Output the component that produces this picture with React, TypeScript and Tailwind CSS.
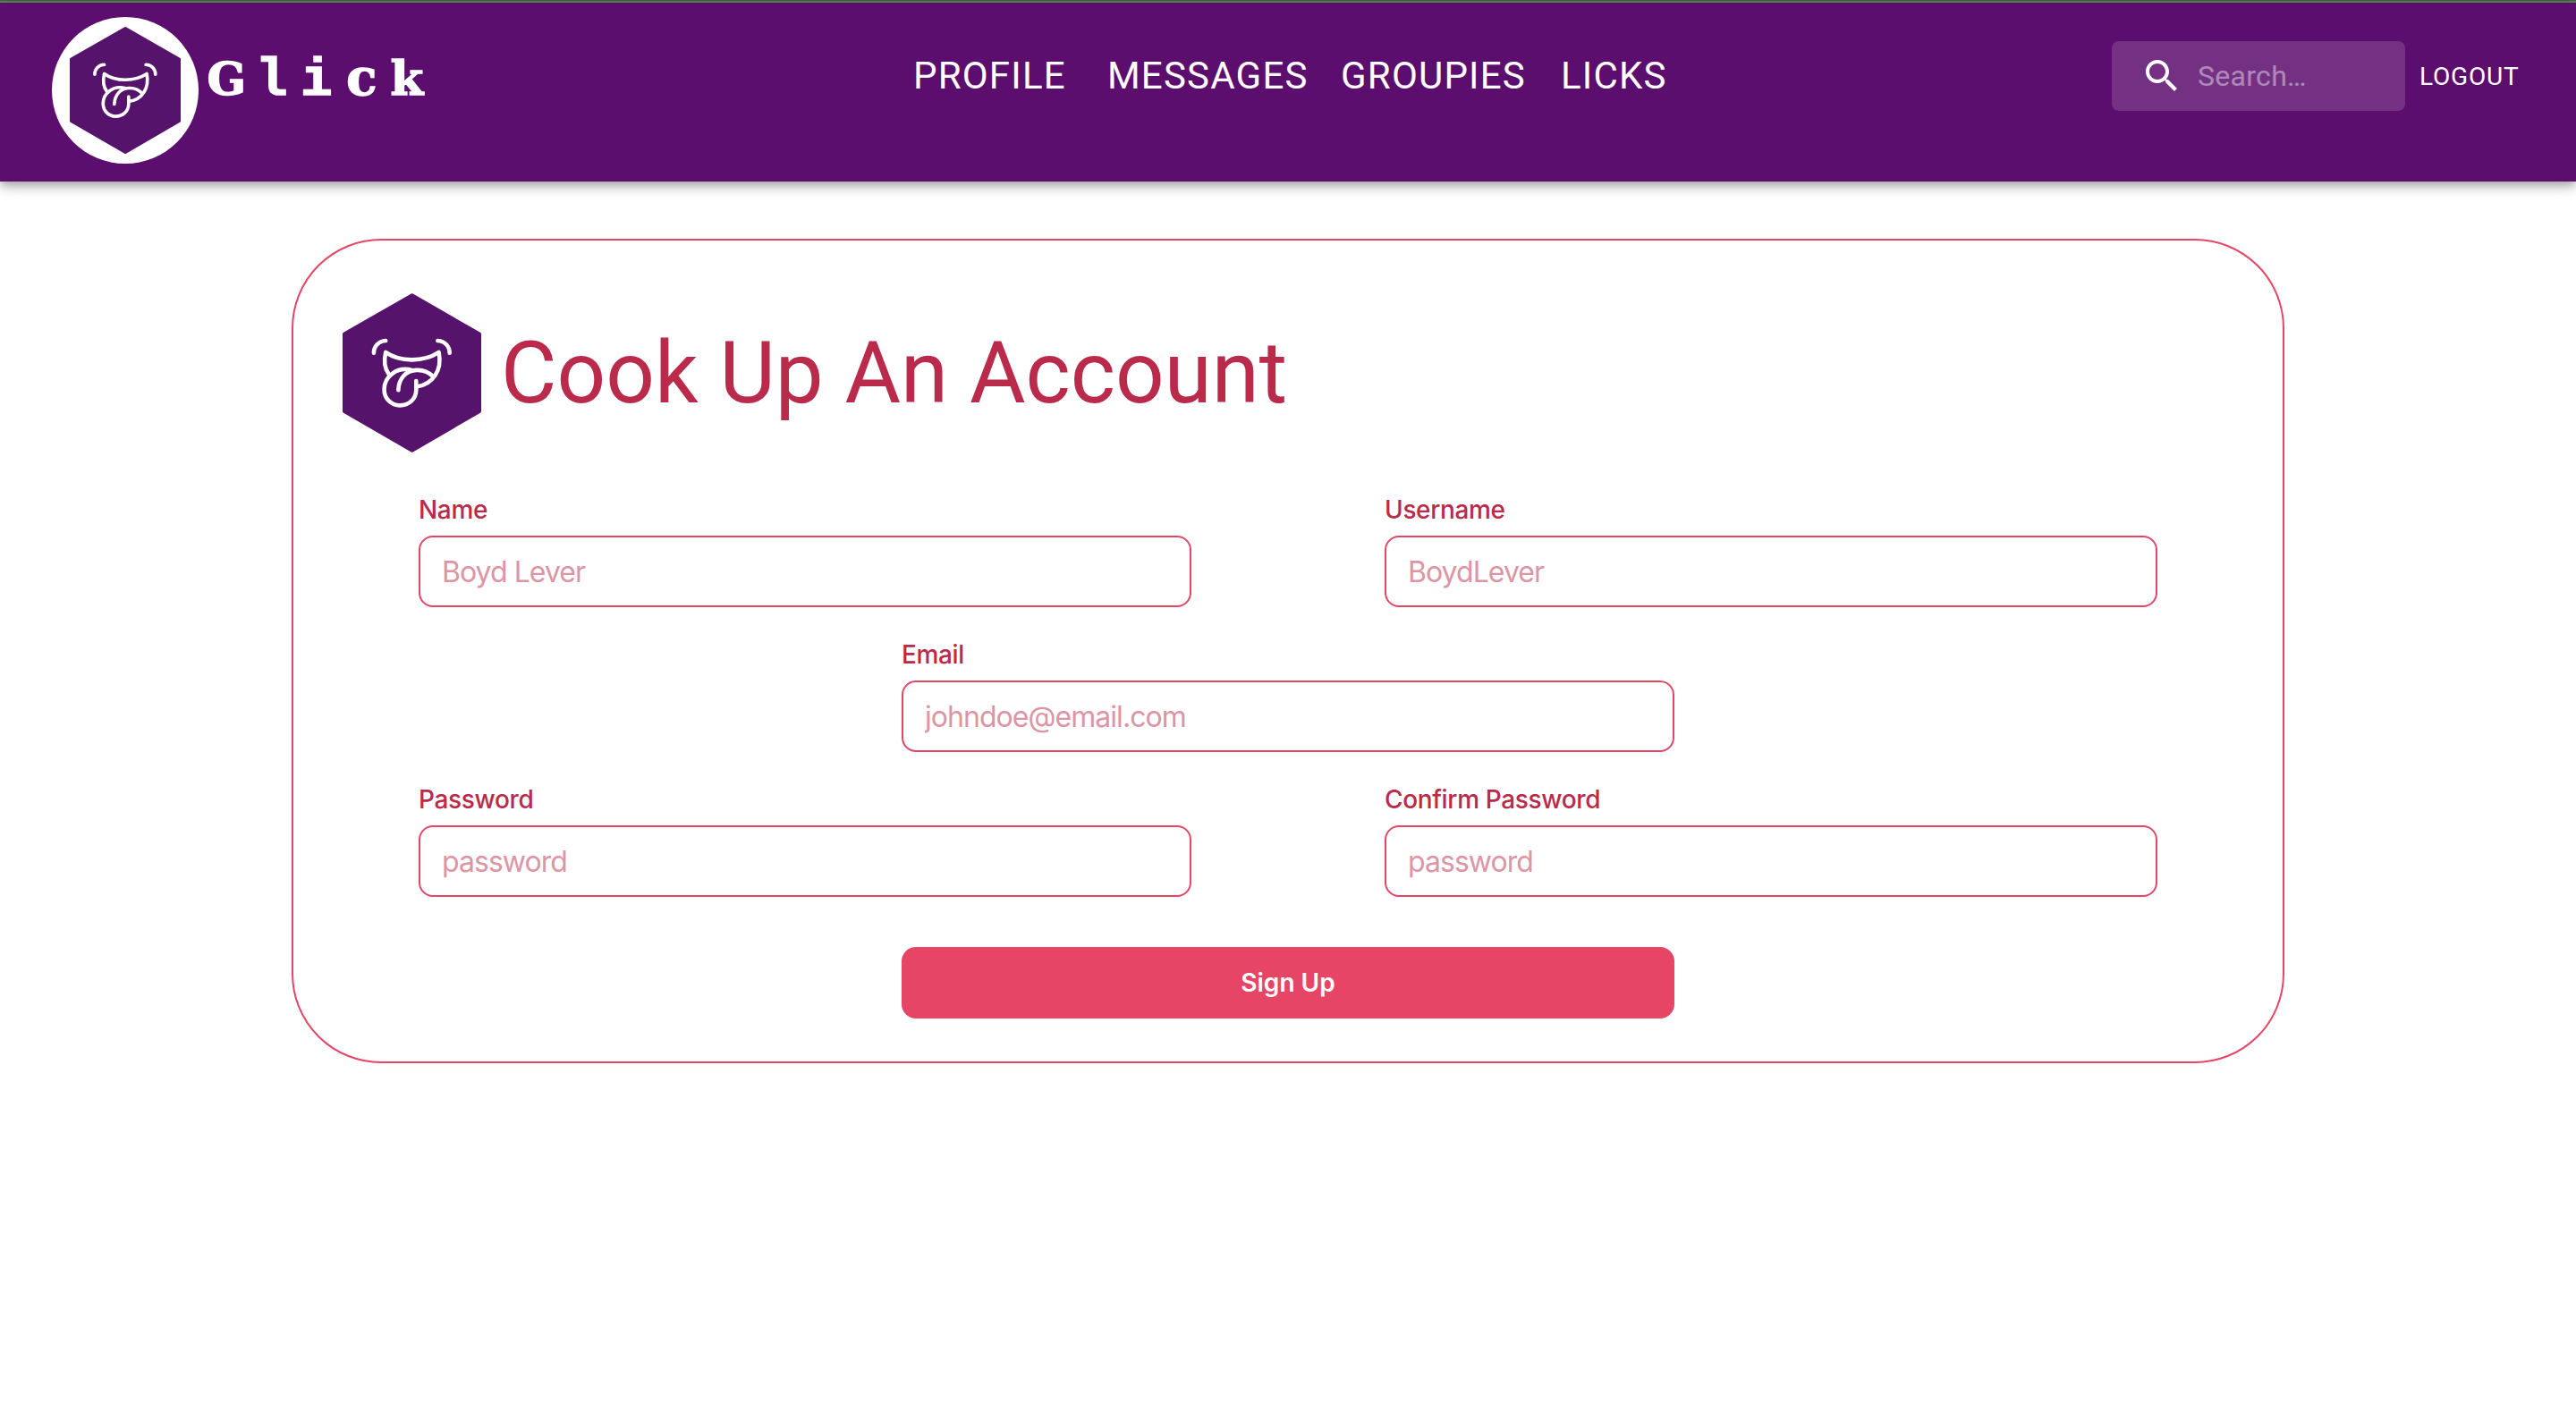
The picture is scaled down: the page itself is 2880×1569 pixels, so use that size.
import React from 'react';

function LogoMark({ className }: { className: string }) {
  return (
    <svg viewBox="115 90 373 427" className={className} fill="none" strokeLinecap="round" strokeLinejoin="round">
      <path d="M302 95 L483 199 V407 L302 512 L120 407 V199 Z" fill="#56136c" stroke="#56136c" strokeWidth="10" />
      <g stroke="#fff" strokeWidth="11">
        <path d="M199 250 C199 232 212 218 231 217" />
        <path d="M371 217 C390 218 403 232 403 250" />
        <path d="M239 306 C227 290 226 270 231 248 C268 275 334 275 374 248 C384 298 356 335 316 340" />
        <path d="M303 297 C262 284 227 314 227 348 C227 374 247 391 269 391 C294 391 313 373 313 349 V325" />
        <path d="M265 350 C266 318 286 297 314 296 C333 295 347 302 358 313" />
      </g>
    </svg>
  );
}

function Wordmark() {
  return (
    <div className="mt-[31px] ml-[6px] flex items-baseline leading-[72px] font-bold [-webkit-text-stroke:1.5px_white]">
      <span className="w-[50.4px] text-center font-['DejaVu_Serif',serif] text-[51px]">G</span>
      <span className="w-[50.4px] text-center font-['Liberation_Mono',monospace] text-[59px]">l</span>
      <span className="w-[50.4px] text-center font-['Liberation_Mono',monospace] text-[59px]">i</span>
      <span className="w-[50.4px] text-center font-['DejaVu_Serif',serif] text-[56px]">c</span>
      <span className="w-[50.4px] text-center font-['DejaVu_Serif',serif] text-[53px]">k</span>
    </div>
  );
}

function Field({ label, placeholder, className = '' }: { label: string; placeholder: string; className?: string }) {
  return (
    <label className={`block w-[864px] ${className}`}>
      <span className="block h-[58px] pt-[11px] font-['Inter',sans-serif] text-[28px] leading-[36px] font-medium tracking-[-0.35px] text-[#ba2a4b]">
        {label}
      </span>
      <input
        placeholder={placeholder}
        className="block h-20 w-full rounded-2xl border-2 border-[#e64565] bg-white px-[24px] font-['Inter',sans-serif] text-[32px] tracking-[-0.95px] placeholder:text-[#dd95a5]"
      />
    </label>
  );
}

export default function App() {
  return (
    <div className="min-h-[1569px] bg-white">
      <div className="h-px bg-[#3d6339]" />
      <div className="h-[2px] bg-[#5d8459]" />
      <header className="flex h-[200px] items-start bg-[#5c0e6f] text-white shadow-[0_4px_8px_-2px_rgba(0,0,0,0.2),0_8px_10px_0_rgba(0,0,0,0.14),0_2px_20px_0_rgba(0,0,0,0.12)]">
        <div className="flex w-[1021px] items-start pt-4 pl-[58px]">
          <div className="flex size-[164px] items-center justify-center rounded-full bg-white">
            <LogoMark className="h-[142px] w-[124px]" />
          </div>
          <Wordmark />
        </div>
        <nav className="flex h-[164px] w-[1340px] font-['Roboto',sans-serif] text-[42px] leading-[164px] tracking-[1.2px]">
          <a className="w-[217px]">PROFILE</a>
          <a className="w-[261px]">MESSAGES</a>
          <a className="w-[246px]">GROUPIES</a>
          <a>LICKS</a>
        </nav>
        <div className="mt-[43px] flex h-[78px] w-[328px] items-center rounded-lg bg-white/15 pl-8">
          <svg viewBox="0 0 24 24" className="size-12 fill-white">
            <path d="M15.5 14h-.79l-.28-.27C15.41 12.59 16 11.11 16 9.5 16 5.91 13.09 3 9.5 3S3 5.91 3 9.5 5.91 16 9.5 16c1.61 0 3.09-.59 4.23-1.57l.27.28v.79l5 4.99L20.49 19l-4.99-5zm-6 0C7.01 14 5 11.99 5 9.5S7.01 5 9.5 5 14 7.01 14 9.5 11.99 14 9.5 14z" />
          </svg>
          <input
            placeholder="Search…"
            className="ml-4 w-[200px] bg-transparent font-['Roboto',sans-serif] text-[32px] tracking-[0.3px] placeholder:text-white/42"
          />
        </div>
        <button className="mt-[43px] ml-[16px] h-[79px] font-['Roboto',sans-serif] text-[28px] tracking-[0.8px]">LOGOUT</button>
      </header>

      <main className="mx-auto mt-16 h-[922px] w-[2228px] rounded-[100px] border-2 border-[#e64565]">
        <div className="ml-[55px] flex h-[237px] items-start">
          <LogoMark className="mt-[59px] h-[178px] w-[155px]" />
          <h1 className="mt-[92px] ml-[22px] font-['Roboto',sans-serif] text-[96px] leading-[112px] text-[#ba2a4b]">Cook Up An Account</h1>
        </div>
        <form className="px-[140px] pt-[35px]">
          <div className="flex gap-[216px]">
            <Field label="Name" placeholder="Boyd Lever" />
            <Field label="Username" placeholder="BoydLever" />
          </div>
          <Field label="Email" placeholder="johndoe@email.com" className="mx-auto mt-6" />
          <div className="mt-6 flex gap-[216px]">
            <Field label="Password" placeholder="password" />
            <Field label="Confirm Password" placeholder="password" />
          </div>
          <button className="mx-auto mt-14 block h-20 w-[864px] rounded-2xl bg-[#e64565] font-['Inter',sans-serif] text-[28px] font-semibold text-white">
            Sign Up
          </button>
        </form>
      </main>
    </div>
  );
}
